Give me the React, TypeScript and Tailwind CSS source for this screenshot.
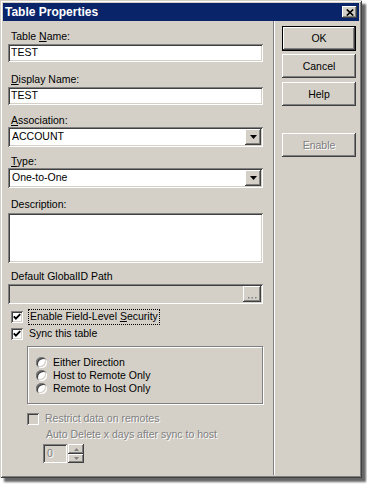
import React from "react";

const raised =
  "shadow-[inset_-1px_-1px_0_#404040,inset_1px_1px_0_#ffffff,inset_-2px_-2px_0_#808080,inset_2px_2px_0_#d4d0c8]";
const sunken =
  "shadow-[inset_1px_1px_0_#808080,inset_-1px_-1px_0_#ffffff,inset_2px_2px_0_#404040,inset_-2px_-2px_0_#d4d0c8]";
const windowShadow =
  "shadow-[inset_1px_1px_0_#d4d0c8,inset_-1px_-1px_0_#404040,inset_2px_2px_0_#ffffff,inset_-2px_-2px_0_#808080,4px_4px_2px_rgba(0,0,0,0.6)]";
const disabledText = "text-[#808080] [text-shadow:1px_1px_0_#ffffff]";

function U({ children }: { children: React.ReactNode }) {
  return <span className="underline underline-offset-[1px]">{children}</span>;
}

function Check() {
  return (
    <div className={`w-[12px] h-[12px] bg-white shrink-0 flex items-center justify-center ${sunken}`}>
      <svg width="8" height="8" viewBox="0 0 8 8">
        <path d="M0.8 3.4 L2.9 5.6 L7.2 1.2" stroke="black" strokeWidth="1.9" fill="none" />
      </svg>
    </div>
  );
}

function Radio() {
  return <div className={`w-[11px] h-[11px] rounded-full bg-white shrink-0 ${sunken}`} />;
}

function Arrow() {
  return (
    <svg width="7" height="4" viewBox="0 0 7 4">
      <polygon points="0,0 7,0 3.5,4" fill="black" />
    </svg>
  );
}

function Button({ label, className, disabled }: { label: string; className: string; disabled?: boolean }) {
  return (
    <div
      className={`w-[74px] h-[24px] bg-[#d4d0c8] flex items-center justify-center leading-none ${raised} ${className} ${
        disabled ? disabledText : ""
      }`}
    >
      {label}
    </div>
  );
}

export default function App() {
  return (
    <div className="w-[367px] h-[484px] bg-white font-['Liberation_Sans',Arial,sans-serif] text-[10.5px] text-black overflow-hidden">
      <div className={`w-[362px] h-[478px] bg-[#d4d0c8] p-[3px] flex flex-col ${windowShadow}`}>
        {/* Title bar */}
        <div className="h-[18px] shrink-0 bg-[#0a246a] flex items-center justify-between pl-[2px] pr-[2px]">
          <span className="text-white font-bold text-[12px] leading-[18px]">Table Properties</span>
          <div className={`w-[15px] h-[12px] bg-[#d4d0c8] flex items-center justify-center ${raised}`}>
            <svg width="8" height="7" viewBox="0 0 8 7">
              <path d="M0.8 0.5 L7.2 6.5 M7.2 0.5 L0.8 6.5" stroke="black" strokeWidth="1.7" />
            </svg>
          </div>
        </div>

        {/* Body */}
        <div className="flex flex-1 min-h-0">
          {/* Left column */}
          <div className="w-[270px] pl-[5px] flex flex-col">
            <div className="mt-[9px] h-[12px] leading-[12px] pl-[3px]">
              Table <U>N</U>ame:
            </div>
            <div className={`mt-[2px] w-[255px] h-[18px] bg-white flex items-center pl-[3px] ${sunken}`}>TEST</div>

            <div className="mt-[11px] h-[12px] leading-[12px] pl-[3px]">
              <U>D</U>isplay Name:
            </div>
            <div className={`mt-[2px] w-[255px] h-[18px] bg-white flex items-center pl-[3px] ${sunken}`}>TEST</div>

            <div className="mt-[9px] h-[12px] leading-[12px] pl-[3px]">
              <U>A</U>ssociation:
            </div>
            <div className={`mt-[1px] w-[255px] h-[20px] bg-white flex items-center justify-between pl-[4px] pr-[2px] ${sunken}`}>
              <span>ACCOUNT</span>
              <div className={`w-[16px] h-[16px] bg-[#d4d0c8] flex items-center justify-center ${raised}`}>
                <Arrow />
              </div>
            </div>

            <div className="mt-[8px] h-[12px] leading-[12px] pl-[3px]">
              <U>T</U>ype:
            </div>
            <div className={`mt-[1px] w-[255px] h-[20px] bg-white flex items-center justify-between pl-[4px] pr-[2px] ${sunken}`}>
              <span>One-to-One</span>
              <div className={`w-[16px] h-[16px] bg-[#d4d0c8] flex items-center justify-center ${raised}`}>
                <Arrow />
              </div>
            </div>

            <div className="mt-[10px] h-[12px] leading-[12px] pl-[3px]">Description:</div>
            <div className={`mt-[3px] w-[255px] h-[50px] bg-white ${sunken}`} />

            <div className="mt-[7px] h-[12px] leading-[12px] pl-[3px]">Default GlobalID Path</div>
            <div className={`mt-[2px] w-[255px] h-[20px] bg-[#d4d0c8] flex items-center justify-end pr-[2px] ${sunken}`}>
              <div className={`w-[18px] h-[16px] bg-[#d4d0c8] flex items-end justify-center pb-[3px] ${raised}`}>
                <svg width="9" height="2" viewBox="0 0 9 2">
                  <rect x="0" y="0" width="1.5" height="1.5" fill="#808080" />
                  <rect x="3.5" y="0" width="1.5" height="1.5" fill="#808080" />
                  <rect x="7" y="0" width="1.5" height="1.5" fill="#808080" />
                </svg>
              </div>
            </div>

            <div className="mt-[5px] h-[16px] flex items-center pl-[3px]">
              <Check />
              <div className="ml-[5px] h-[16px] border border-dotted border-black flex items-center pl-[1px] pr-[1px]">
                <span>
                  Enable Field-Level <U>S</U>ecurity
                </span>
              </div>
            </div>
            <div className="mt-[1px] h-[16px] flex items-center pl-[3px]">
              <Check />
              <span className="ml-[6px]">Sync this table</span>
            </div>

            <div className="mt-[4px] ml-[19px] w-[236px] h-[58px] border border-[#808080] shadow-[inset_1px_1px_0_#ffffff,1px_1px_0_#ffffff] pt-[9px] flex flex-col">
              <div className="h-[13px] flex items-center pl-[8px]">
                <Radio />
                <span className="ml-[6px]">Either Direction</span>
              </div>
              <div className="h-[13px] flex items-center pl-[8px]">
                <Radio />
                <span className="ml-[6px]">Host to Remote Only</span>
              </div>
              <div className="h-[13px] flex items-center pl-[8px]">
                <Radio />
                <span className="ml-[6px]">Remote to Host Only</span>
              </div>
            </div>

            <div className="mt-[8px] ml-[19px] h-[14px] flex items-center">
              <div className={`w-[12px] h-[12px] bg-[#d4d0c8] shrink-0 ${sunken}`} />
              <span className={`ml-[6px] ${disabledText}`}>Restrict data on remotes</span>
            </div>
            <div className={`mt-[2px] ml-[38px] h-[12px] leading-[12px] ${disabledText}`}>
              Auto Delete x days after sync to host
            </div>
            <div className="mt-[4px] ml-[35px] h-[19px] flex">
              <div className={`w-[24px] h-[19px] bg-[#d4d0c8] flex items-center pl-[4px] ${sunken} ${disabledText}`}>0</div>
              <div className="ml-[1px] w-[16px] flex flex-col">
                <div className={`h-[10px] bg-[#d4d0c8] flex items-center justify-center ${raised}`}>
                  <svg width="5" height="3" viewBox="0 0 5 3">
                    <polygon points="2.5,0 5,3 0,3" fill="#808080" />
                  </svg>
                </div>
                <div className={`h-[9px] bg-[#d4d0c8] flex items-center justify-center ${raised}`}>
                  <svg width="5" height="3" viewBox="0 0 5 3">
                    <polygon points="0,0 5,0 2.5,3" fill="#808080" />
                  </svg>
                </div>
              </div>
            </div>
          </div>

          {/* Separator */}
          <div className="w-[2px] border-l border-l-[#808080] border-r border-r-white" />

          {/* Right column */}
          <div className="flex-1 pl-[7px] flex flex-col">
            <div className="mt-[5px] w-[74px] h-[25px] border border-black">
              <div className={`w-full h-full bg-[#d4d0c8] flex items-center justify-center leading-none ${raised}`}>OK</div>
            </div>
            <Button label="Cancel" className="mt-[3px]" />
            <Button label="Help" className="mt-[4px]" />
            <Button label="Enable" className="mt-[27px]" disabled />
          </div>
        </div>
      </div>
    </div>
  );
}
